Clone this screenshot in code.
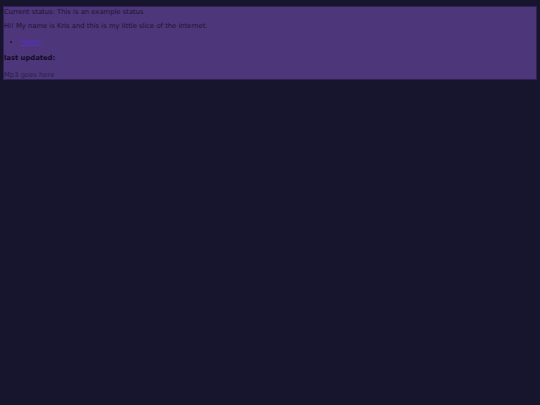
export default function App() {
  return (
    <div className="min-h-screen bg-[#16152d] pt-[6px] px-[3px] font-['DejaVu_Sans',sans-serif] text-[6.8px] leading-[8px] text-[#1c1533]">
      <div className="border border-[#2f2356] bg-[#4e367a] pt-[1px]">
        <div>Current status: This is an example status</div>
        <p className="mt-[6px]">Hi! My name is Kris and this is my little slice of the internet.</p>
        <ul className="list-disc pl-[17px] mt-[8px]">
          <li>
            <a href="#" className="text-[#5a2fc0] underline">Home</a>
          </li>
        </ul>
        <div className="mt-[8px]">
          <b className="font-bold text-[#0f0c1f]">last updated:</b>
        </div>
        <p className="mt-[9px] text-[#29223f]">Mp3 goes here</p>
      </div>
    </div>
  );
}
